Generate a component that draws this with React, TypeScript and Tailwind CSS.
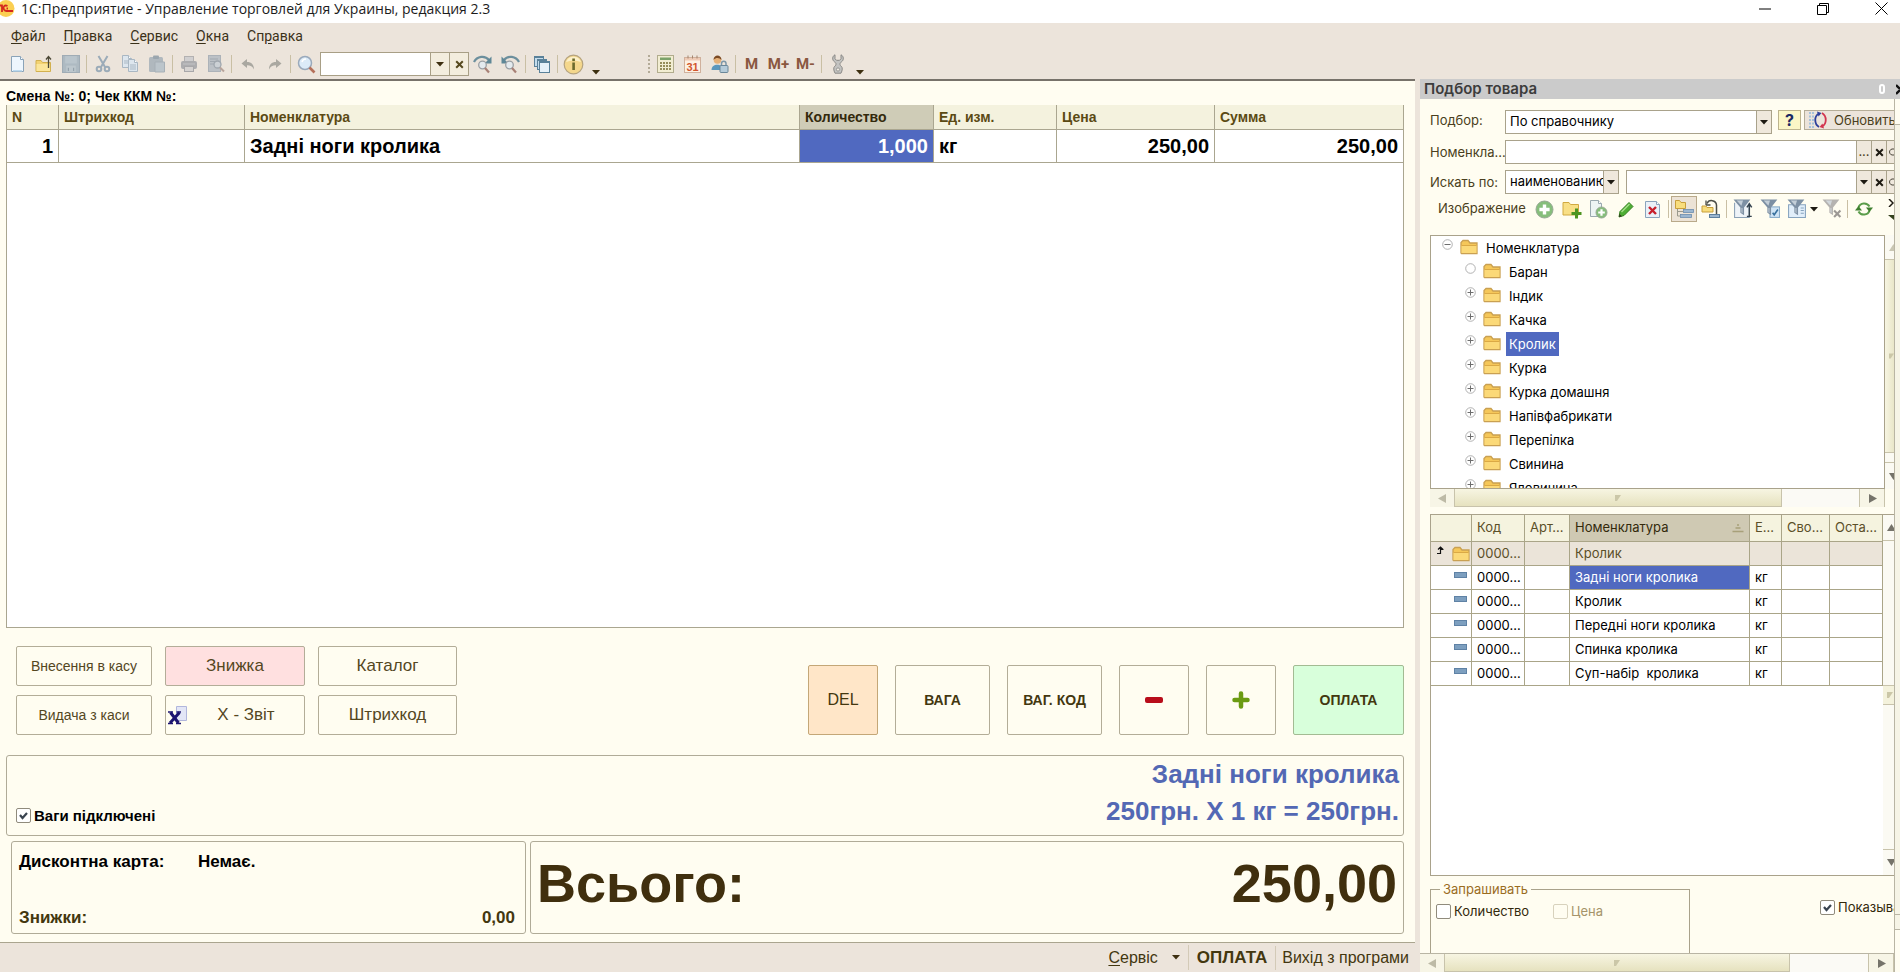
import type { ReactNode } from "react";

const dark = "#3d2f10";

/* ---------- small building blocks ---------- */

function ToolButton({ label, children }: { label: string; children: ReactNode }) {
  return (
    <button type="button" aria-label={label} className="flex h-6 w-[27px] shrink-0 items-center justify-center">
      {children}
    </button>
  );
}

function Sep() {
  return (
    <span className="flex w-[5px] shrink-0 justify-center">
      <span className="h-[18px] w-px bg-[#c9bfa4]" />
    </span>
  );
}

function Down({ color = dark }: { color?: string }) {
  return (
    <svg width="8" height="5" viewBox="0 0 8 5" className="shrink-0">
      <path d="M0 0h8L4 4.6z" fill={color} />
    </svg>
  );
}

function Triangle({ dir, color }: { dir: "up" | "down" | "left" | "right"; color: string }) {
  const d = {
    up: "M0 8L4.5 1L9 8z",
    down: "M0 1h9L4.5 8z",
    left: "M8 0v9L0 4.500z",
    right: "M1 0v9l8-4.500z",
  }[dir];
  return (
    <svg width="9" height="9" viewBox="0 0 9 9" className="shrink-0">
      <path d={d} fill={color} />
    </svg>
  );
}

function Cross({ color = "#1d1a12" }: { color?: string }) {
  return (
    <svg width="9" height="9" viewBox="0 0 9 9">
      <path d="M1.200 1.200l6.600 6.600M7.800 1.200L1.200 7.800" stroke={color} strokeWidth="2" />
    </svg>
  );
}

/* ---------- drawings ---------- */

function PageShape({ x = 0, y = 0, w = 12, h = 16, fill = "#eef6fd", stroke = "#8aa3b8" }) {
  return (
    <>
      <path
        d={`M${x + 0.5} ${y + 0.5}h${w - 4}l3 3v${h - 4}h-${w - 1}z`}
        fill={fill}
        stroke={stroke}
      />
      <path d={`M${x + w - 3.5} ${y + 0.5}v3h3`} fill="#fff" stroke={stroke} />
    </>
  );
}

const IconNew = () => (
  <svg width="16" height="18" viewBox="0 0 16 18">
    <PageShape x={2} y={1} w={13} h={16} />
    <path d="M4 15h9v1.500H4z" fill="#bcd9ef" />
  </svg>
);

const IconOpen = () => (
  <svg width="18" height="18" viewBox="0 0 18 18">
    <path d="M1 5.500h5l1.500 2h8v9H1z" fill="#f3d272" stroke="#d2b04f" />
    <path d="M1.500 9h13.500v7H1.500z" fill="#fbe59a" />
    <path d="M13.500 13V2M11 4.500L13.500 1.500L16 4.500" fill="none" stroke="#4c4836" strokeWidth="1.300" />
  </svg>
);

const IconSave = () => (
  <svg width="18" height="18" viewBox="0 0 17 17">
    <rect x=".5" y=".5" width="16" height="16" fill="#aebac2" stroke="#a0acb5" />
    <rect x="3" y="1" width="11" height="7" fill="#bac5cc" />
    <rect x="4" y="10" width="9" height="6" fill="#bdc7cd" />
    <path d="M6 12v3M11 12v3" stroke="#909da7" />
  </svg>
);

const IconCut = () => (
  <svg width="16" height="18" viewBox="0 0 16 18" fill="none" stroke="#9babb8" strokeWidth="2">
    <path d="M3.500 1l6.500 11M12.500 1L6 12" />
    <circle cx="4" cy="14" r="2.300" />
    <circle cx="12" cy="14" r="2.300" />
  </svg>
);

const IconCopy = () => (
  <svg width="18" height="18" viewBox="0 0 18 18">
    <PageShape x={1} y={0} w={10} h={13} fill="#dde6ee" stroke="#a9b7c3" />
    <PageShape x={7} y={4} w={10} h={13} fill="#dde6ee" stroke="#a9b7c3" />
    <path d="M3 6h4M3 8h4M9 10h6M9 12h6M9 14h6" stroke="#a9b7c3" />
  </svg>
);

const IconPaste = () => (
  <svg width="18" height="18" viewBox="0 0 18 18">
    <rect x="1" y="2" width="14" height="15" rx="1.500" fill="#b0b8be" />
    <rect x="5" y="0.500" width="6" height="3.500" rx="1" fill="#9ba6ae" />
    <path d="M7 7h9.500v10H7z" fill="#bcc5cb" stroke="#a7b0b7" />
  </svg>
);

const IconPrint = () => (
  <svg width="18" height="18" viewBox="0 0 18 18">
    <rect x="4.500" y="1.500" width="9" height="6" fill="#d0cfd0" stroke="#b3b1b1" />
    <rect x="1" y="6" width="16" height="8" rx="2" fill="#adadaf" />
    <rect x="4.500" y="11.500" width="9" height="5" fill="#d6d3d1" stroke="#a8a7a9" />
    <path d="M3 9h12" stroke="#c4c4c6" />
  </svg>
);

const IconPreview = () => (
  <svg width="18" height="18" viewBox="0 0 18 18">
    <rect x="1.500" y=".5" width="12" height="16" fill="#bcc1c6" stroke="#acb2b8" />
    <path d="M3 4h8M3 6.500h5M3 9h4" stroke="#a2a9b0" />
    <circle cx="10.500" cy="9.500" r="3.500" fill="#ccd1d5" stroke="#a0a7ae" strokeWidth="1.300" />
    <path d="M13 12.500l4 4" stroke="#b8a49b" strokeWidth="2" />
  </svg>
);

const IconUndo = ({ flip = false }: { flip?: boolean }) => (
  <svg width="14" height="13" viewBox="0 0 14 13" className={flip ? "-scale-x-100" : ""}>
    <path d="M0.500 5.500L6 1v3c4.500 0 7 2.500 7 7.500C11.500 8.500 9.500 7.300 6 7.300V10z" fill="#aaa8a1" />
  </svg>
);

const IconSearch = () => (
  <svg width="19" height="19" viewBox="0 0 19 19">
    <circle cx="8" cy="8" r="6.500" fill="#dcebf8" stroke="#9aa9bb" strokeWidth="1.500" />
    <path d="M5 7c.5-2 2-3 4-3" fill="none" stroke="#fff" strokeWidth="1.500" />
    <path d="M12.500 12.500l5 5" stroke="#b5705a" strokeWidth="2.600" />
  </svg>
);

const IconFind = ({ flip = false }: { flip?: boolean }) => (
  <svg width="20" height="19" viewBox="0 0 20 19">
    <g transform={flip ? "translate(20 0) scale(-1 1)" : undefined}>
      <path d="M1 7c3-6 11-7 15-2" fill="none" stroke="#6c8f9d" strokeWidth="2.200" />
      <path d="M18.500 1.500v7h-7z" fill="#5f8797" />
    </g>
    <circle cx="9.500" cy="10" r="3.800" fill="#e4eaee" stroke="#9a9fa4" strokeWidth="1.300" />
    <path d="M12 13l4 4.500" stroke="#a88076" strokeWidth="2.200" />
  </svg>
);

const IconWindows = () => (
  <svg width="18" height="18" viewBox="0 0 18 18">
    <rect x="1.500" y="1.500" width="9" height="10" fill="#c4dcec" stroke="#5a8199" />
    <rect x="4.500" y="4.500" width="9" height="10" fill="#c4dcec" stroke="#5a8199" />
    <rect x="6.500" y="6.500" width="10" height="11" fill="#e6f1f9" stroke="#5a8199" />
    <path d="M1 2.500h10M4 5.500h10M7 7.500h10" stroke="#5a8199" />
  </svg>
);

const IconInfo = () => (
  <svg width="21" height="21" viewBox="0 0 21 21">
    <circle cx="10.500" cy="10.500" r="9.300" fill="#f4d78c" stroke="#b5a37e" strokeWidth="1.200" />
    <path d="M3 8a8 8 0 0 1 15 0c-5-2-10-2-15 0z" fill="#fcf0c8" />
    <rect x="9.300" y="8.500" width="2.600" height="7.500" fill="#6c6a2c" />
    <rect x="9.300" y="4.500" width="2.600" height="2.600" fill="#6c6a2c" />
  </svg>
);

const IconCalc = () => (
  <svg width="17" height="18" viewBox="0 0 17 18">
    <rect x=".5" y=".5" width="16" height="17" fill="#f2edd2" stroke="#b1ac8d" />
    <rect x="3" y="2.500" width="11" height="2.500" fill="#7ba269" />
    {[7, 10, 13].map((y) =>
      [3, 6, 9, 12].map((x) => <rect key={`${x}-${y}`} x={x} y={y} width="2" height="2" fill="#968d59" />),
    )}
  </svg>
);

const IconCalendar = () => (
  <svg width="17" height="18" viewBox="0 0 17 18">
    <rect x=".5" y="2.500" width="16" height="15" fill="#fdf1e4" stroke="#d0b19d" />
    <rect x="1" y="3" width="15" height="2.500" fill="#efcbb6" />
    <path d="M4 .5v3M8.500 .5v3M13 .5v3" stroke="#a4856f" />
    <text x="8.500" y="15.500" textAnchor="middle" fontSize="11" fontWeight="bold" fontFamily="Liberation Sans, sans-serif" fill="#d2562d">
      31
    </text>
  </svg>
);

const IconUser = () => (
  <svg width="18" height="18" viewBox="0 0 18 18">
    <circle cx="6.500" cy="5" r="3.800" fill="#e6b077" />
    <path d="M2.500 5c0-6 8-6 8 0-2-2-5-3-8 0z" fill="#7a4a24" />
    <path d="M.5 15c0-7 11-7 12 0z" fill="#5b97bd" />
    <path d="M10.500 11V8.500c0-3 4.500-3 4.500 0V11" fill="none" stroke="#7d97a8" strokeWidth="1.500" />
    <rect x="9" y="10.500" width="8" height="7" rx="1" fill="#b5cbd9" stroke="#6b8799" />
  </svg>
);

const IconWrench = () => (
  <svg width="14" height="20" viewBox="0 0 14 20">
    <path
      d="M4 .8v4L5.500 6.300h3L10 4.800v-4c2.800 1.300 3.300 5.200.3 7.200-1 .7-1.300 1.300-1.300 2.200 0 .8.300 1.300 1.200 2 1.600 1.400 1.300 4-.2 7H4c-1.500-3-1.800-5.600-.2-7 .9-.7 1.200-1.200 1.200-2 0-.9-.3-1.500-1.300-2.200C.7 6 1.200 2.100 4 .8z"
      fill="#c3c3c1"
      stroke="#8b8a87"
    />
    <circle cx="7" cy="15.500" r="1.600" fill="#f1ede6" stroke="#83827f" strokeWidth=".7" />
  </svg>
);

function Folder() {
  return (
    <svg width="18" height="16" viewBox="0 0 18 16" className="shrink-0">
      <path d="M1 14V3.500L3 1.500h5L10 4h7v10.500H1.500z" fill="#f5c759" stroke="#c9a052" strokeWidth="1.300" />
      <path d="M1.500 6.500h15v7.500h-15z" fill="#fbd978" />
      <path d="M1.500 6.500h15" stroke="#dba945" />
    </svg>
  );
}

function Expander({ kind }: { kind: "plus" | "minus" | "none" }) {
  return (
    <svg width="11" height="11" viewBox="0 0 11 11" className="shrink-0">
      <circle cx="5.500" cy="5.500" r="4.800" fill="#fff" stroke="#a9a9a9" strokeWidth=".9" />
      {kind !== "none" && <path d="M2.500 5.500h6" stroke="#6e6e6e" />}
      {kind === "plus" && <path d="M5.500 2.500v6" stroke="#6e6e6e" />}
    </svg>
  );
}

function GreenPlus({ x, y, r }: { x: number; y: number; r: number }) {
  return (
    <g>
      <circle cx={x} cy={y} r={r} fill="#86be7b" stroke="#97a894" />
      <path
        d={`M${x - r * 0.6} ${y}h${r * 1.2}M${x} ${y - r * 0.6}v${r * 1.2}`}
        stroke="#fff"
        strokeWidth={r * 0.4}
      />
    </g>
  );
}

const IconAdd = () => (
  <svg width="19" height="19" viewBox="0 0 19 19">
    <GreenPlus x={9.5} y={9.5} r={8.5} />
  </svg>
);

const IconAddFolder = () => (
  <svg width="20" height="19" viewBox="0 0 20 19">
    <path d="M1 15V2.500h6l1.500 2h8V15z" fill="#f8df86" stroke="#d0a941" />
    <path d="M14.500 8.500v10M9.500 13.500h10" stroke="#4d9420" strokeWidth="3" />
  </svg>
);

const IconAddPage = () => (
  <svg width="19" height="19" viewBox="0 0 19 19">
    <PageShape x={1} y={0} w={12} h={17} fill="#edf4f4" stroke="#9aa9b0" />
    <GreenPlus x={12.5} y={12.5} r={5.5} />
  </svg>
);

const IconPencil = () => (
  <svg width="16" height="17" viewBox="0 0 16 17">
    <path d="M11 1.500l4 4L6 14.500l-5 1.500 1-5.500z" fill="#4fae35" stroke="#2f7f1d" />
    <path d="M11.500 3l-8 8" stroke="#a6e08c" strokeWidth="1.500" />
    <path d="M1 16l.6-3 2.200 2.200z" fill="#34351f" />
  </svg>
);

const IconDeletePage = () => (
  <svg width="17" height="19" viewBox="0 0 17 19">
    <PageShape x={1} y={1} w={15} h={17} fill="#eaf1f8" stroke="#8ba4bc" />
    <path d="M5 7l7 7M12 7l-7 7" stroke="#c8202c" strokeWidth="2.400" />
  </svg>
);

const IconHierarchy = () => (
  <svg width="21" height="20" viewBox="0 0 21 20">
    <path d="M1.500 9.500v-8h4l1.500 2h4.500v6z" fill="#f8dd7c" stroke="#c99f3a" />
    <path d="M3.500 10v7H6M3.500 12.500H9" fill="none" stroke="#9a998c" />
    <rect x="9.500" y="10.500" width="10" height="3" fill="#9bb6d0" stroke="#6c8dad" strokeWidth=".8" />
    <rect x="6.500" y="15.500" width="11" height="3" fill="#9bb6d0" stroke="#6c8dad" strokeWidth=".8" />
  </svg>
);

const IconMoveUp = () => (
  <svg width="20" height="20" viewBox="0 0 20 20">
    <path d="M1 13V7h4l1 1.500h6V13z" fill="#f8dd7c" stroke="#c99f3a" />
    <path d="M6 4.500C8 0 15 1 15.500 6v9" fill="none" stroke="#4b4d46" strokeWidth="1.500" />
    <path d="M5 6V1.500M5 6h4.500" stroke="#4b4d46" strokeWidth="1.300" />
    <rect x="8.500" y="15.500" width="10" height="3" fill="#9bb6d0" stroke="#5d7f9f" />
  </svg>
);

function Funnel({ fill = "#7d90a4" }: { fill?: string }) {
  return (
    <>
      <path d="M.5 .5h16L10.500 8v7.500L7 13V8z" fill={fill} />
      <path d="M3.500 1.500h6L8 6.500z" fill="#dbe3ea" opacity=".75" />
      <path d="M8 8.500h1v5l-1-.8z" fill="#dbe3ea" opacity=".75" />
    </>
  );
}

const IconFilter = ({ kind }: { kind: "arrow" | "check" | "list" | "off" }) => (
  <svg width="20" height="20" viewBox="0 0 19 19">
    {kind === "arrow" && <path d="M1.500 3.500v14h14v-14" fill="#eef3f8" stroke="#8aa0b5" />}
    {kind === "list" && (
      <>
        <path d="M1.500 5.500h16v12h-16z" fill="#e1eefa" stroke="#86a3be" />
        <path d="M13 8.500h3M13 11h3M13 13.500h3" stroke="#86a3be" />
      </>
    )}
    {kind === "check" && <rect x="9.500" y="7.500" width="9" height="10" fill="#cfe4f5" stroke="#86aac9" />}
    <Funnel fill={kind === "off" ? "#b5b3b0" : "#7d90a4"} />
    {kind === "arrow" && (
      <path d="M15.500 16.500V5M13.200 8l2.300-3.500L17.800 8M13.200 16.500h4.600" fill="none" stroke="#33424f" strokeWidth="1.400" />
    )}
    {kind === "check" && <path d="M12 13l1.500 2 3.500-5" fill="none" stroke="#39719f" strokeWidth="1.500" />}
    {kind === "off" && <path d="M11.500 11l6 6M17.500 11l-6 6" stroke="#9c9894" strokeWidth="2" />}
  </svg>
);

const IconRefresh = () => (
  <svg width="18" height="16" viewBox="0 0 18 16">
    <path d="M3.500 6.500C5 1.500 12 1 14.500 5.500" fill="none" stroke="#5b9d4b" strokeWidth="2" />
    <path d="M14.500 9.500C13 14.500 6 15 3.500 10.500" fill="none" stroke="#5b9d4b" strokeWidth="2" />
    <path d="M0 9.500L3.500 5L7 9.500z" fill="#3f8030" />
    <path d="M11 6.500h7L14.500 11z" fill="#3f8030" />
  </svg>
);

const IconReload = () => (
  <svg width="19" height="18" viewBox="0 0 19 18">
    <path d="M1 1v16M4 1v16" stroke="#8fb7dd" strokeWidth="1.500" strokeDasharray="2 1.500" />
    <path d="M10 16C5 13 5 5 10 2.500" fill="none" stroke="#2c3f9b" strokeWidth="1.800" />
    <path d="M8 .5L12.500 2L9.500 5.500z" fill="#2c3f9b" />
    <path d="M13 2c5 3 5 11 0 13.500" fill="none" stroke="#d2344f" strokeWidth="1.800" />
    <path d="M15 17.500L10.500 16l3-3.500z" fill="#d2344f" />
  </svg>
);

const IconGrip = () => (
  <svg width="6" height="6" viewBox="0 0 6 6">
    <path d="M0 0h6L2 6H0z" fill="#cbc7a8" />
  </svg>
);

/* ---------- title, menu and toolbar ---------- */

function TitleBar() {
  return (
    <header className="flex h-[23px] shrink-0 items-start bg-white font-['Open_Sans','Noto_Sans',sans-serif] text-[#1c1c1c]">
      <svg width="15" height="17" viewBox="0 0 15 17" className="shrink-0">
        <circle cx="6" cy="8.500" r="8.500" fill="#fbcf52" />
        <path d="M0 5.500h2V12M7.500 6C4.500 4.500 2.500 7 4 9.500c.8 1.200 1.500 1.500 2.500 1.500H13M8 8.500H6.500" fill="none" stroke="#d4281e" strokeWidth="1.800" />
      </svg>
      <h1 className="ml-1.5 flex-1 text-[14px] leading-[18px]">
        1С:Предприятие - Управление торговлей для Украины, редакция 2.3
      </h1>
      <div className="flex">
        <button type="button" aria-label="Свернуть" className="flex h-[17px] w-[58px] items-center justify-center">
          <svg width="12" height="2"><path d="M0 1h12" stroke="#000" /></svg>
        </button>
        <button type="button" aria-label="Развернуть" className="flex h-[17px] w-[58px] items-center justify-center">
          <svg width="12" height="12" viewBox="0 0 12 12" fill="none" stroke="#000">
            <path d="M.5 2.500h9v9h-9zM2.500 2.500v-2h9v9h-2" />
          </svg>
        </button>
        <button type="button" aria-label="Закрыть" className="flex h-[17px] w-12 items-center justify-end pr-3">
          <svg width="13" height="13" viewBox="0 0 13 13" className="shrink-0">
            <path d="M.5 .5l12 12M12.500 .5l-12 12" stroke="#000" />
          </svg>
        </button>
      </div>
    </header>
  );
}

function MenuItem({ pre = "", hot, rest }: { pre?: string; hot: string; rest: string }) {
  return (
    <a href="#" className="text-[#3b3119]">
      {pre}
      <span className="underline underline-offset-2">{hot}</span>
      {rest}
    </a>
  );
}

function MemButton({ children }: { children: string }) {
  return (
    <button type="button" className="flex h-6 w-[27px] shrink-0 items-center justify-center font-['Roboto',sans-serif] text-[15px] font-bold text-[#8a5740]">
      {children}
    </button>
  );
}

function Toolbar() {
  return (
    <div className="flex h-7 items-center pl-[3px]">
      <ToolButton label="Новый"><IconNew /></ToolButton>
      <ToolButton label="Открыть"><IconOpen /></ToolButton>
      <ToolButton label="Сохранить"><IconSave /></ToolButton>
      <Sep />
      <ToolButton label="Вырезать"><IconCut /></ToolButton>
      <ToolButton label="Копировать"><IconCopy /></ToolButton>
      <ToolButton label="Вставить"><IconPaste /></ToolButton>
      <Sep />
      <ToolButton label="Печать"><IconPrint /></ToolButton>
      <ToolButton label="Просмотр"><IconPreview /></ToolButton>
      <Sep />
      <ToolButton label="Отменить"><IconUndo /></ToolButton>
      <ToolButton label="Вернуть"><IconUndo flip /></ToolButton>
      <Sep />
      <ToolButton label="Найти"><IconSearch /></ToolButton>
      <div className="flex h-6 w-[149px] shrink-0 border border-[#a89f86] bg-white">
        <input aria-label="Поиск" className="min-w-0 flex-1 px-1 text-sm outline-none" />
        <button type="button" aria-label="История поиска" className="flex w-[19px] items-center justify-center border-l border-[#a89f86] bg-[#f3edde]">
          <Down />
        </button>
        <button type="button" aria-label="Очистить" className="flex w-[19px] items-center justify-center border-l border-[#a89f86] bg-[#f3edde]">
          <Cross color="#56491f" />
        </button>
      </div>
      <ToolButton label="Найти далее"><IconFind /></ToolButton>
      <ToolButton label="Найти ранее"><IconFind flip /></ToolButton>
      <Sep />
      <ToolButton label="Окна"><IconWindows /></ToolButton>
      <Sep />
      <ToolButton label="О программе"><IconInfo /></ToolButton>
      <button type="button" aria-label="Настройка панели" className="flex h-6 w-[17px] shrink-0 items-end justify-center pb-px">
        <Down />
      </button>
      <span className="ml-11 h-[18px] w-1 shrink-0 border-l-2 border-dotted border-[#b3aa97]" />
      <ToolButton label="Калькулятор"><IconCalc /></ToolButton>
      <ToolButton label="Календарь"><IconCalendar /></ToolButton>
      <ToolButton label="Пользователь"><IconUser /></ToolButton>
      <Sep />
      <MemButton>M</MemButton>
      <MemButton>M+</MemButton>
      <MemButton>M-</MemButton>
      <Sep />
      <ToolButton label="Параметры"><IconWrench /></ToolButton>
      <button type="button" aria-label="Ещё" className="flex h-6 w-[17px] shrink-0 items-end justify-center pb-px">
        <Down />
      </button>
    </div>
  );
}

/* ---------- cash desk ---------- */

function ReceiptTable() {
  const head = "h-[25px] border-b border-r border-[#aaa690] px-[5px] pb-px text-left text-[14px] leading-5 font-bold";
  const cell = "h-[33px] border-b border-r border-[#aaa690] px-[5px] text-[20px] leading-6 font-bold text-black";
  return (
    <div className="min-h-0 flex-1 border border-t-0 border-[#aaa690] bg-white">
      <table className="w-full table-fixed border-separate border-spacing-0 bg-white">
        <colgroup>
          <col className="w-[52px]" />
          <col className="w-[186px]" />
          <col />
          <col className="w-[134px]" />
          <col className="w-[123px]" />
          <col className="w-[158px]" />
          <col className="w-[188px]" />
        </colgroup>
        <thead className="bg-[#f4f2de] text-[#5b4a14]">
          <tr>
            <th className={head}>N</th>
            <th className={head}>Штрихкод</th>
            <th className={head}>Номенклатура</th>
            <th className={`${head} bg-[#cfccb7] text-[#33290c]`}>Количество</th>
            <th className={head}>Ед. изм.</th>
            <th className={head}>Цена</th>
            <th className={`${head} border-r-0`}>Сумма</th>
          </tr>
        </thead>
        <tbody>
          <tr>
            <td className={`${cell} text-right`}>1</td>
            <td className={cell} />
            <td className={cell}>Задні ноги кролика</td>
            <td className={`${cell} bg-[#5069c0] text-right text-white`}>1,000</td>
            <td className={cell}>кг</td>
            <td className={`${cell} text-right`}>250,00</td>
            <td className={`${cell} border-r-0 text-right`}>250,00</td>
          </tr>
        </tbody>
      </table>
    </div>
  );
}

function SmallAction({ className, children }: { className: string; children: ReactNode }) {
  return (
    <button type="button" className={`flex h-10 items-center justify-center border border-[#b3ad98] rounded-xs text-[#54471f] ${className}`}>
      {children}
    </button>
  );
}

function BigAction({ className, label, children }: { className: string; label?: string; children: ReactNode }) {
  return (
    <button
      type="button"
      aria-label={label}
      className={`flex h-[70px] items-center justify-center rounded-xs border text-[#43370f] ${className}`}
    >
      {children}
    </button>
  );
}

function Controls() {
  return (
    <div className="flex justify-between pt-[18px] pl-2.5">
      <div className="grid grid-cols-[136px_140px_139px] gap-x-[13px] gap-y-[9px]">
        <SmallAction className="text-[14px]">Внесення в касу</SmallAction>
        <SmallAction className="bg-[#ffe0e0] text-[17px]">Знижка</SmallAction>
        <SmallAction className="text-[17px]">Каталог</SmallAction>
        <SmallAction className="text-[14px]">Видача з каси</SmallAction>
        <SmallAction className="text-[17px]">
          <svg width="20" height="20" viewBox="0 0 20 20" className="ml-0.5 shrink-0">
            <path d="M8.500 1.500h10v14h-10z" fill="#e3e6f6" stroke="#b1b6dc" />
            <path d="M2.500 7.500l8 10.500M11.500 7.500L2 18" stroke="#1c1470" strokeWidth="3" />
            <path d="M0 7h5M8.500 7h4.500M0 18.500h5M8 18.500h5" stroke="#1c1470" strokeWidth="1.500" />
          </svg>
          <span className="flex-1">X - Звіт</span>
        </SmallAction>
        <SmallAction className="text-[17px]">Штрихкод</SmallAction>
      </div>
      <div className="flex gap-[17px] pt-[19px] text-sm font-bold">
        <BigAction className="w-[70px] border-[#c4a777] bg-[#ffe6c8] text-base font-normal">DEL</BigAction>
        <BigAction className="w-[95px] border-[#b3ad98]">ВАГА</BigAction>
        <BigAction className="w-[95px] border-[#b3ad98]">ВАГ. КОД</BigAction>
        <BigAction label="Менше" className="w-[70px] border-[#b3ad98]">
          <svg width="18" height="6"><rect width="18" height="6" rx="2" fill="#b80d1b" /></svg>
        </BigAction>
        <BigAction label="Більше" className="w-[70px] border-[#b3ad98]">
          <svg width="18" height="18" viewBox="0 0 18 18">
            <path d="M9 2.500v13M2.500 9h13" stroke="#6b9b12" strokeWidth="4.500" strokeLinecap="round" />
          </svg>
        </BigAction>
        <BigAction className="w-[111px] border-[#a3bb93] bg-[#d8ffdb]">ОПЛАТА</BigAction>
      </div>
    </div>
  );
}

function CheckBox({ id, label, checked = false, disabled = false, className = "" }: { id: string; label: string; checked?: boolean; disabled?: boolean; className?: string }) {
  return (
    <span className={`flex shrink-0 items-center gap-[3px] ${className}`}>
      <span className="relative flex size-[15px] shrink-0">
        <input
          id={id}
          type="checkbox"
          defaultChecked={checked}
          disabled={disabled}
          className="peer size-[15px] appearance-none rounded-[2px] border border-[#908b7c] bg-white disabled:border-[#d8d2bd] disabled:bg-transparent"
        />
        <svg viewBox="0 0 15 15" className="pointer-events-none absolute inset-0 hidden size-[15px] peer-checked:block">
          <path d="M4 7l2.500 3L11 5" fill="none" stroke="#3a4450" strokeWidth="2.200" />
        </svg>
      </span>
      <label htmlFor={id}>{label}</label>
    </span>
  );
}

function Totals() {
  return (
    <>
      <section className="mt-5 flex h-[81px] justify-between rounded-[3px] border border-[#b0ab98] pr-1 pl-[9px]">
        <CheckBox id="scales" label="Ваги підключені" checked className="self-end pb-2 text-[15px] font-bold text-black" />
        <p className="text-right text-[26px] leading-[37px] font-bold text-[#5368b4]">
          Задні ноги кролика
          <br />
          250грн. X 1 кг = 250грн.
        </p>
      </section>
      <div className="mt-[5px] mb-2 flex h-[93px] gap-1 pl-[5px]">
        <dl className="grid w-[515px] shrink-0 grid-cols-[179px_1fr] content-between rounded-[3px] border border-[#b0ab98] pt-[7px] pr-2.5 pb-[3px] pl-[7px] text-[17px] font-bold">
          <dt className="text-black">Дисконтна карта:</dt>
          <dd className="text-black">Немає.</dd>
          <dt className="text-[#43370f]">Знижки:</dt>
          <dd className="text-right text-[#43370f]">0,00</dd>
        </dl>
        <div className="flex flex-1 items-center justify-between rounded-[3px] border border-[#b0ab98] px-1.5 pb-2.5 text-[54px] leading-[60px] font-bold text-[#402f0e]">
          <span>Всього:</span>
          <output>250,00</output>
        </div>
      </div>
    </>
  );
}

function CashDesk() {
  return (
    <main className="flex min-w-0 flex-1 flex-col border-t-2 border-[#77726a] bg-[#fffdf1]">
      <div className="flex min-h-0 flex-1 flex-col pr-[11px] pl-[6px]">
        <p className="pt-[6px] text-[14px] leading-[18px] font-bold text-black">Смена №: 0; Чек ККМ №:</p>
        <ReceiptTable />
        <Controls />
        <Totals />
      </div>
      <footer className="flex h-[30px] shrink-0 items-center justify-end border-t border-[#aaa58f] bg-[#ece4db] pr-1.5 text-base text-[#43370f]">
        <a href="#"><span className="underline underline-offset-2">С</span>ервіс</a>
        <span className="mr-2 ml-3.5"><Down /></span>
        <a href="#" className="border-l border-[#d3cab7] px-2 text-[17px] font-bold">ОПЛАТА</a>
        <a href="#" className="border-l border-[#d3cab7] pl-1.5">Вихід з програми</a>
      </footer>
    </main>
  );
}

/* ---------- goods picker ---------- */

const fieldBox = "flex h-6 border border-[#a9a28b] bg-white";
const fieldBtn = "flex shrink-0 items-center justify-center border-l border-[#a9a28b] bg-[#efe8dc]";

function PickerForm() {
  return (
    <form className="flex flex-col gap-1.5 pt-[11px] pl-2.5 text-[13px] text-[#4a3f20]">
      <div className="flex">
        <label htmlFor="pick" className="w-[75px] shrink-0 leading-5">Подбор:</label>
        <div className={`${fieldBox} min-w-0 flex-1`}>
          <select id="pick" className="min-w-0 flex-1 appearance-none px-1 text-black outline-none">
            <option>По справочнику</option>
          </select>
          <span className={`${fieldBtn} w-[15px]`}><Down color="#1d1a12" /></span>
        </div>
        <button type="button" aria-label="Справка" className="ml-1.5 h-5 w-[23px] shrink-0 border border-[#bdb48e] bg-[#fbf6c6] text-base leading-[18px] font-bold text-[#1b2a63]">?</button>
        <button type="button" className="ml-[3px] flex h-5 w-[90px] shrink-0 items-center overflow-hidden border border-r-0 border-[#b5ad98] bg-[#ece4db] pl-1">
          <span className="shrink-0"><IconReload /></span>
          <span className="ml-1.5 shrink-0 leading-[18px]">Обновить</span>
        </button>
      </div>
      <div className="flex">
        <label htmlFor="item" className="w-[75px] shrink-0 leading-6 whitespace-nowrap">Номенкла...</label>
        <div className={`${fieldBox} min-w-0 flex-1 border-r-0`}>
          <input id="item" className="min-w-0 flex-1 px-1 text-black outline-none" />
          <button type="button" aria-label="Выбрать" className={`${fieldBtn} w-[15px]`}>...</button>
          <button type="button" aria-label="Очистить" className={`${fieldBtn} w-[15px]`}><Cross /></button>
          <button type="button" aria-label="Открыть" className={`${fieldBtn} w-2`}>
            <svg width="6" height="8" viewBox="0 0 6 8"><path d="M6 1C0 0 0 8 6 7" fill="none" stroke="#4a463a" /></svg>
          </button>
        </div>
      </div>
      <div className="flex">
        <label htmlFor="by" className="w-[75px] shrink-0 leading-6">Искать по:</label>
        <div className={`${fieldBox} w-[114px] shrink-0`}>
          <select id="by" className="min-w-0 flex-1 appearance-none overflow-hidden pl-1 text-black outline-none">
            <option>наименованию</option>
          </select>
          <span className={`${fieldBtn} w-[15px]`}><Down color="#1d1a12" /></span>
        </div>
        <div className={`${fieldBox} ml-[7px] min-w-0 flex-1 border-r-0`}>
          <input aria-label="Искать" className="min-w-0 flex-1 px-1 text-black outline-none" />
          <button type="button" aria-label="Список" className={`${fieldBtn} w-[15px]`}><Down color="#1d1a12" /></button>
          <button type="button" aria-label="Очистить поиск" className={`${fieldBtn} w-[15px]`}><Cross /></button>
          <button type="button" aria-label="Найти товар" className={`${fieldBtn} w-2`}>
            <svg width="6" height="8" viewBox="0 0 6 8"><path d="M6 1C0 0 0 8 6 7" fill="none" stroke="#4a463a" /></svg>
          </button>
        </div>
      </div>
    </form>
  );
}

function PickerTools() {
  return (
    <div className="mt-px flex h-7 items-center pl-[18px] text-[13px] text-[#4a3f20]">
      <a href="#" className="w-[93px] shrink-0">Изображение</a>
      <ToolButton label="Добавить"><IconAdd /></ToolButton>
      <ToolButton label="Добавить группу"><IconAddFolder /></ToolButton>
      <ToolButton label="Добавить копированием"><IconAddPage /></ToolButton>
      <ToolButton label="Изменить"><IconPencil /></ToolButton>
      <ToolButton label="Пометить на удаление"><IconDeletePage /></ToolButton>
      <Sep />
      <button type="button" aria-label="Иерархия" className="flex size-[26px] shrink-0 items-center justify-center border border-[#b9a98a] bg-[#ece3d6]">
        <IconHierarchy />
      </button>
      <ToolButton label="Переместить"><IconMoveUp /></ToolButton>
      <Sep />
      <ToolButton label="Отбор"><IconFilter kind="arrow" /></ToolButton>
      <ToolButton label="Отбор по значению"><IconFilter kind="check" /></ToolButton>
      <ToolButton label="История отборов"><IconFilter kind="list" /></ToolButton>
      <span className="flex w-2 shrink-0"><Down color="#1d1a12" /></span>
      <ToolButton label="Отключить отбор"><IconFilter kind="off" /></ToolButton>
      <Sep />
      <ToolButton label="Обновить список"><IconRefresh /></ToolButton>
      <span className="ml-auto flex flex-col gap-2">
        <svg width="6" height="8" viewBox="0 0 6 8"><path d="M1 0l4 4-4 4" fill="none" stroke="#1d1a12" strokeWidth="1.500" /></svg>
        <svg width="6" height="5" viewBox="0 0 6 5"><path d="M0 0h6v5z" fill="#33401d" /></svg>
      </span>
    </div>
  );
}

const groups: { name: string; leaf?: boolean; selected?: boolean }[] = [
  { name: "Баран", leaf: true },
  { name: "Індик" },
  { name: "Качка" },
  { name: "Кролик", selected: true },
  { name: "Курка" },
  { name: "Курка домашня" },
  { name: "Напівфабрикати" },
  { name: "Перепілка" },
  { name: "Свинина" },
  { name: "Яловичина" },
];

function Tree() {
  return (
    <ul className="h-[254px] min-w-0 flex-1 overflow-hidden border border-[#a9a28b] bg-white pl-[11px] text-[13px] leading-6 text-black">
      <li className="flex h-6 items-start">
        <span className="pt-[3px]"><Expander kind="minus" /></span>
        <span className="pt-[3px] pl-[7px]"><Folder /></span>
        <span className="ml-[5px] px-[3px]">Номенклатура</span>
      </li>
      {groups.map((g) => (
        <li key={g.name} className="flex h-6 items-start pl-[23px]">
          <span className="pt-[3px]"><Expander kind={g.leaf ? "none" : "plus"} /></span>
          <span className="pt-[3px] pl-[7px]"><Folder /></span>
          <span className={g.selected ? "ml-[5px] bg-[#5069c0] px-[3px] text-white" : "ml-[5px] px-[3px]"}>{g.name}</span>
        </li>
      ))}
    </ul>
  );
}

function HScroll({ thumb }: { thumb: string }) {
  return (
    <div className="flex h-[18px] min-w-0 flex-1 bg-[#fbfaf5]">
      <span className="flex w-[25px] items-center justify-center border-r border-[#c8c3ab] bg-[#f7f5e6]"><Triangle dir="left" color="#bdbaa6" /></span>
      <span className={`flex items-center justify-center border-r border-b border-[#c8c3ab] bg-linear-to-b from-[#f7f5e2] to-[#e6e2bf] ${thumb}`}><IconGrip /></span>
      <span className="flex-1" />
      <span className="flex w-[26px] items-center justify-center border-x border-[#c8c3ab] bg-[#f7f5e6]"><Triangle dir="right" color="#75736a" /></span>
    </div>
  );
}

const goods = ["Задні ноги кролика", "Кролик", "Передні ноги кролика", "Спинка кролика", "Суп-набір\u00a0 кролика"];

function GoodsTable() {
  const th = "h-[27px] overflow-hidden whitespace-nowrap border-r border-b border-[#aaa588] px-[5px] text-left font-normal";
  const td = "h-6 overflow-hidden whitespace-nowrap border-r border-b border-[#aaa588] px-[5px] leading-[23px]";
  return (
    <div className="min-w-0 flex-1 border-y border-l border-[#a9a28b] bg-white">
      <table className="w-full table-fixed border-separate border-spacing-0 text-[13px] text-black">
        <colgroup>
          <col className="w-[41px]" />
          <col className="w-[53px]" />
          <col className="w-[45px]" />
          <col />
          <col className="w-8" />
          <col className="w-12" />
          <col className="w-[53px]" />
        </colgroup>
        <thead className="bg-[#f5f3df] text-[#5b4f28]">
          <tr>
            <th className={th} aria-label="Вид" />
            <th className={th}>Код</th>
            <th className={th}>Арт...</th>
            <th className={`${th} bg-[#cfc9b3] text-[#33290c]`}>
              <span className="flex items-center justify-between">
                Номенклатура
                <svg width="12" height="9" viewBox="0 0 12 9"><path d="M5 1h2M3.500 4h5M.5 7.500h11" stroke="#a8a07a" strokeWidth="1.500" /></svg>
              </span>
            </th>
            <th className={th}>Е...</th>
            <th className={th}>Сво...</th>
            <th className={th}>Оста...</th>
          </tr>
        </thead>
        <tbody>
          <tr className="bg-[#ebe4d9] text-[#5b4f28]">
            <td className="h-6 border-r border-b border-[#aaa588] pr-px">
              <span className="flex items-start justify-end gap-2">
                <svg width="7" height="8" viewBox="0 0 7 8"><path d="M3.500 8V1.500M1 3.500L3.500 1L6 3.500M3.500 7.500H0M3.500 3.500H6.500" fill="none" stroke="#111" strokeWidth="1.200" /></svg>
                <Folder />
              </span>
            </td>
            <td className={td}>0000...</td>
            <td className={td} />
            <td className={td}>Кролик</td>
            <td className={td} />
            <td className={td} />
            <td className={td} />
          </tr>
          {goods.map((name, i) => (
            <tr key={name}>
              <td className="h-6 border-r border-b border-[#aaa588] pr-1 pb-1">
                <svg width="13" height="7" className="ml-auto"><rect x=".5" y=".5" width="12" height="5" fill="#7d9fbf" stroke="#5f82a5" /></svg>
              </td>
              <td className={td}>0000...</td>
              <td className={td} />
              <td className={i === 0 ? `${td} bg-[#5069c0] text-white` : td}>{name}</td>
              <td className={td}>кг</td>
              <td className={td} />
              <td className={td} />
            </tr>
          ))}
        </tbody>
      </table>
    </div>
  );
}

function Picker() {
  return (
    <aside className="flex w-[480px] shrink-0 flex-col font-['Inter','Liberation_Sans',sans-serif]">
      <div className="flex h-5 items-center bg-[#cbcbcb] pl-1 text-[15px] leading-5 font-semibold text-[#3c3c3c]">
        <h2 className="flex-1">Подбор товара</h2>
        <span className="mr-[11px] h-2.5 w-1.5 rounded-full border-2 border-white" />
        <svg width="4" height="11" viewBox="0 0 4 11"><path d="M0 1l4 4M0 10l4-4" stroke="#111" strokeWidth="2.400" /></svg>
      </div>
      <div className="flex min-h-0 flex-1">
        <div className="flex min-w-0 flex-1 flex-col overflow-hidden border-r border-[#b9b5a4] bg-[#fffdf1]">
          <PickerForm />
          <PickerTools />
          <div className="mt-3 flex pl-2.5">
            <Tree />
            <div className="flex w-[9px] shrink-0 flex-col overflow-hidden bg-[#fbfaf3]">
              <span className="flex h-[25px] items-center border-b border-[#c8c3ab] pl-1"><Triangle dir="up" color="#c9c6b3" /></span>
              <span className="flex flex-1 items-center border-b border-[#c8c3ab] bg-linear-to-r from-[#f7f5e2] to-[#e9e6c9] pl-1"><IconGrip /></span>
              <span className="h-2.5 border-b border-[#c8c3ab]" />
              <span className="flex h-[26px] items-center pl-1"><Triangle dir="down" color="#75736a" /></span>
            </div>
          </div>
          <div className="flex pr-[9px] pl-2.5"><HScroll thumb="w-[327px]" /></div>
          <div className="mt-[7px] flex min-h-0 flex-1 pl-2.5">
            <GoodsTable />
            <div className="flex w-[11px] shrink-0 flex-col overflow-hidden border-y border-[#a9a28b] bg-[#fbfaf3]">
              <span className="flex h-[26px] items-center border-b border-[#c8c3ab] pl-1"><Triangle dir="up" color="#75736a" /></span>
              <span className="h-[145px] border-b border-[#c8c3ab]" />
              <span className="flex h-[19px] items-center border-b border-[#c8c3ab] bg-[#f4f2dc] pl-1"><IconGrip /></span>
              <span className="flex-1" />
              <span className="flex h-[26px] items-center border-t border-[#c8c3ab] pl-1"><Triangle dir="down" color="#75736a" /></span>
            </div>
          </div>
          <div className="flex h-[77px] shrink-0 justify-between pt-1 pl-2.5 text-[13px] text-[#33290c]">
            <fieldset className="w-[260px] border border-b-0 border-[#a9a28b] px-[5px]">
              <legend className="ml-1 px-[3px] leading-[18px] text-[#9a6c1f]">Запрашивать</legend>
              <div className="flex gap-6 pt-1">
                <CheckBox id="qty" label="Количество" />
                <CheckBox id="price" label="Цена" disabled className="text-[#a5946a]" />
              </div>
            </fieldset>
            <div className="w-[74px] overflow-hidden pt-[18px]">
              <CheckBox id="show" label="Показывать" checked />
            </div>
          </div>
          <div className="flex border-t border-[#b9b5a4]"><HScroll thumb="w-[345px]" /></div>
        </div>
        <div className="flex w-[5px] shrink-0 flex-col bg-[#f6f4e6]">
          <span className="h-[26px] border-b border-[#b9b5a4] bg-[#fffdf1]" />
          <span className="flex-1" />
          <span className="h-4 border-y border-[#b9b5a4]" />
          <span className="h-[42px] bg-[#fffdf1]" />
        </div>
      </div>
    </aside>
  );
}

export default function App() {
  return (
    <div className="flex h-screen flex-col overflow-hidden bg-[#ece4db] font-['Liberation_Sans',sans-serif]">
      <TitleBar />
      <nav aria-label="Меню" className="flex h-[27px] shrink-0 items-center gap-[18px] pl-[11px] font-['Roboto','Liberation_Sans',sans-serif] text-[14px]">
        <MenuItem hot="Ф" rest="айл" />
        <MenuItem hot="П" rest="равка" />
        <MenuItem hot="С" rest="ервис" />
        <MenuItem hot="О" rest="кна" />
        <MenuItem pre="Сп" hot="р" rest="авка" />
      </nav>
      <Toolbar />
      <div className="mt-px flex min-h-0 flex-1 gap-[5px]">
        <CashDesk />
        <Picker />
      </div>
    </div>
  );
}
